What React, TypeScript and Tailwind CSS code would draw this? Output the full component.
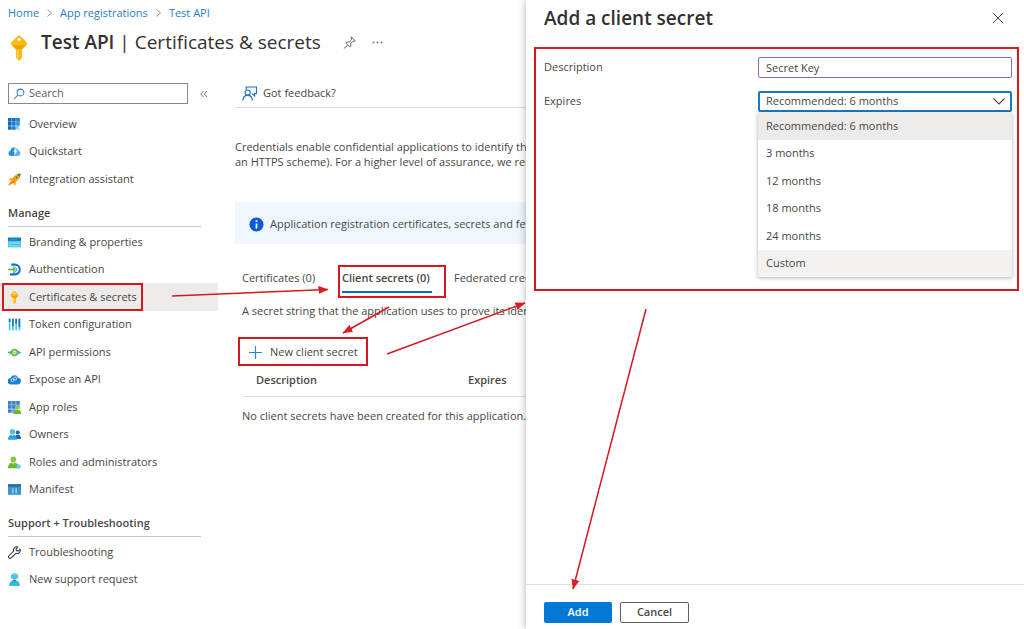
import { useState } from 'react'
import type { ReactNode } from 'react'

type NavItem = { label: string; icon: ReactNode; active?: boolean }

function Icon({ children, className = 'size-[13px]' }: { children: ReactNode; className?: string }) {
  return (
    <svg viewBox="0 0 16 16" fill="none" aria-hidden="true" className={`shrink-0 ${className}`}>
      {children}
    </svg>
  )
}

function KeyIcon({ className }: { className?: string }) {
  return (
    <Icon className={className}>
      <path d="M7.4.4a.9.9 0 0 1 1.2 0l3.8 3.7a1.6 1.6 0 0 1 0 2.3L9.8 9v5.2L8 16l-1.8-1.8V9L3.6 6.4a1.6 1.6 0 0 1 0-2.3z" fill="#fdb913" />
      <path d="M4 6.300h8L9.800 8.600H6.200z" fill="#f59d0b" />
      <path d="M7.200 9.500v5" stroke="#ffd95e" strokeWidth=".9" />
      <circle cx="8" cy="2.800" r="1.100" fill="#fff4cf" />
    </Icon>
  )
}

const overviewItems: NavItem[] = [
  {
    label: 'Overview',
    icon: (
      <Icon>
        <path d="M0 0h4.500v4.500H0zM5 0h4.500v4.500H5zM0 5h4.500v4.500H0zM0 10h4.500v4.500H0z" fill="#0f6cbd" />
        <path d="M10 0h4.500v4.500H10zM5 5h4.500v4.500H5zM5 10h4.500v4.500H5z" fill="#1b7fd0" />
        <path d="M10 5h4.500v4.500H10z" fill="#2a93e0" />
        <path d="m8.500 8.500 6.300 2.400-2 1.100 2.400 2.500-1 1-2.500-2.400-1 2z" fill="#8cc8f0" />
      </Icon>
    ),
  },
  {
    label: 'Quickstart',
    icon: (
      <Icon>
        <path d="M3.300 13.500A3.200 3.200 0 0 1 3 7.200 4.600 4.600 0 0 1 8 3v10.500z" fill="#2b8fd0" />
        <path d="M8 3a4.600 4.600 0 0 1 4.700 3.800 3.400 3.400 0 0 1 0 6.700H8z" fill="#5bb4e5" />
        <path d="M9.500 4 6.800 8.500h2L7.500 13l4.200-5.800H9.500L11 4z" fill="#fff" />
      </Icon>
    ),
  },
  {
    label: 'Integration assistant',
    icon: (
      <Icon>
        <path d="M15.500.5C10 1 7.500 3.500 5.500 6.300L1 7l-.5 1.500 3.500.5L0 15.500 7 12l.6 3.500L9 15l1-4.500C13 8.500 15 6 15.500.5z" fill="#f7a51c" />
        <path d="M9 7 .5 15.500 7 12z" fill="#e07b12" />
        <path d="M15.500.5c-1.800.1-3.200.5-4.400 1.200l3.200 3.200c.7-1.200 1.100-2.600 1.200-4.400z" fill="#4b7f3a" />
        <circle cx="10.500" cy="5.500" r="1.300" fill="#5d7b2f" />
      </Icon>
    ),
  },
]

const manageItems: NavItem[] = [
  {
    label: 'Branding & properties',
    icon: (
      <Icon>
        <path d="M0 2h16v12H0z" fill="#50c8ea" />
        <path d="M0 2h16v4H0z" fill="#1280bf" />
        <path d="M1.500 8h13v4.500h-13z" fill="#84dcf3" />
        <path d="M2 10.500h12M2 4h9" stroke="#2ba6d4" />
      </Icon>
    ),
  },
  {
    label: 'Authentication',
    icon: (
      <Icon>
        <path d="M4 2h4.500a6 6 0 0 1 0 12H2.500" stroke="#1471bd" strokeWidth="2.500" />
        <path d="M6 5.200A3.200 3.200 0 1 1 6 11" stroke="#35a4df" strokeWidth="1.400" />
        <path d="M0 7h6V4.800L9.800 8 6 11.200V9H0z" fill="#62b52c" />
      </Icon>
    ),
  },
  { label: 'Certificates & secrets', icon: <KeyIcon />, active: true },
  {
    label: 'Token configuration',
    icon: (
      <Icon>
        <path d="M2 1v14M6 1v14M10 1v14M14 1v14" stroke="#47c3e8" strokeWidth="2" />
        <path d="M2 1v4M6 1v9M10 1v6M14 1v10" stroke="#1a72b5" strokeWidth="2" />
      </Icon>
    ),
  },
  {
    label: 'API permissions',
    icon: (
      <Icon>
        <path d="M0 8h3.500M12.500 8H16" stroke="#32a9dc" strokeWidth="2" />
        <path d="M2 5.800 4.200 8 2 10.200M14 5.800 11.800 8l2.200 2.200" stroke="#2d95cc" strokeWidth="1.200" />
        <circle cx="8" cy="8" r="3.500" stroke="#6cb33f" strokeWidth="2" />
        <circle cx="8" cy="8" r="1.500" fill="#86d633" />
      </Icon>
    ),
  },
  {
    label: 'Expose an API',
    icon: (
      <Icon>
        <path d="M3.700 14A3.700 3.700 0 0 1 3.200 6.300 5 5 0 0 1 12.500 5.700a4.200 4.200 0 0 1-.3 8.300z" fill="#1b7fd0" />
        <circle cx="5.500" cy="8.800" r="1.700" stroke="#c5e6fa" strokeWidth="1.200" />
        <circle cx="9" cy="6.800" r="1.800" stroke="#c5e6fa" strokeWidth="1.200" />
      </Icon>
    ),
  },
  {
    label: 'App roles',
    icon: (
      <Icon>
        <path d="M0 0h4.500v4.500H0zM5 0h4.500v4.500H5zM10 0h4.500v4.500H10zM0 5h4.500v4.500H0zM5 5h4.500v4.500H5zM0 10h4.500v4.500H0z" fill="#3f7fd0" />
        <path d="M10 5h4.500v4.500H10zM5 10h4.500v4.500H5z" fill="#6ba3e5" />
        <circle cx="11.500" cy="7.800" r="2.500" fill="#8bd03a" />
        <path d="M6.500 16c0-3.500 1.800-5.500 5-5.500s4.500 2 4.500 5.500z" fill="#6fb82c" />
      </Icon>
    ),
  },
  {
    label: 'Owners',
    icon: (
      <Icon>
        <circle cx="12" cy="5.500" r="2.500" fill="#1565b0" />
        <path d="M8 13.500c0-3.500 1.500-5.200 4-5.200s4 1.700 4 5.200z" fill="#1565b0" />
        <circle cx="5.500" cy="4.500" r="3.200" fill="#4cc0ea" />
        <path d="M0 14.500C0 10.500 2 8 5.500 8s5.500 2.500 5.500 6.500z" fill="#27a3da" />
        <path d="m4 8 1.500 2.500L7 8z" fill="#c8f0fb" />
      </Icon>
    ),
  },
  {
    label: 'Roles and administrators',
    icon: (
      <Icon>
        <circle cx="6.500" cy="4" r="3.500" fill="#86c93b" />
        <path d="M0 15c0-4.500 2.300-7 6.500-7s6.500 2.500 6.500 7z" fill="#6eb52b" />
        <path d="M5 8h3l-1.500 3z" fill="#d8f3b4" />
        <circle cx="13" cy="13" r="2.700" fill="#6dcbea" />
      </Icon>
    ),
  },
  {
    label: 'Manifest',
    icon: (
      <Icon>
        <path d="M0 1.500h16v13H0z" fill="#3a94cc" />
        <path d="M0 1.500h16v3H0z" fill="#2a6b9b" />
        <path d="M6 6.500v6M10 6.500v6" stroke="#a9def5" strokeWidth="1.500" />
      </Icon>
    ),
  },
]

const supportItems: NavItem[] = [
  {
    label: 'Troubleshooting',
    icon: (
      <Icon>
        <path
          d="M14.800 3.800 12.500 6 10.300 5.700 10 3.500l2.200-2.300a4 4 0 0 0-5.300 5L1.200 12a1.800 1.800 0 0 0 2.700 2.700L9.700 9a4 4 0 0 0 5.100-5.200z"
          stroke="#3b3a39"
          strokeWidth="1.300"
          strokeLinejoin="round"
        />
      </Icon>
    ),
  },
  {
    label: 'New support request',
    icon: (
      <Icon>
        <path d="M4 6.500V5a4 4 0 0 1 8 0v1.500" stroke="#3aa9d8" strokeWidth="1.300" />
        <circle cx="8" cy="5" r="3.300" fill="#48c4e6" />
        <path d="M1.500 16c0-4.500 2-7.500 6.500-7.500s6.500 3 6.500 7.500z" fill="#35b9e0" />
        <path d="M6.300 8.500h3.400L8 11.500z" fill="#197fb5" />
      </Icon>
    ),
  },
]

const expiryOptions = ['Recommended: 6 months', '3 months', '12 months', '18 months', '24 months', 'Custom']

function NavList({ items }: { items: NavItem[] }) {
  return (
    <ul>
      {items.map(item => (
        <li key={item.label} className="odd:h-7 even:h-[27px]">
          <a
            href="#"
            aria-current={item.active ? 'page' : undefined}
            className={`flex h-full items-center gap-2 pl-2 ${item.active ? 'bg-[#edebe9]' : ''}`}
          >
            {item.icon}
            {item.label}
          </a>
        </li>
      ))}
    </ul>
  )
}

function NavHeading({ children }: { children: ReactNode }) {
  return (
    <h2 className="mr-[17px] mb-px ml-2 flex h-[34px] items-center border-b border-[#c8c6c4] pt-2 font-semibold">
      {children}
    </h2>
  )
}

function Chevron() {
  return (
    <svg viewBox="0 0 5 8" fill="none" className="h-2 w-[5px]" aria-hidden="true">
      <path d="m.5.5 4 3.500-4 3.500" stroke="#8a8886" strokeWidth=".9" />
    </svg>
  )
}

function Crumbs() {
  return (
    <nav aria-label="Breadcrumb" className="flex h-[26px] items-center gap-2 text-[#2b7cc4]">
      <a href="#">Home</a>
      <Chevron />
      <a href="#">App registrations</a>
      <Chevron />
      <a href="#">Test API</a>
    </nav>
  )
}

function Sidebar() {
  return (
    <aside className="w-[218px] shrink-0">
      <div className="mb-1.5 flex items-center gap-3 pt-[5px] pl-2">
        <label className="flex h-[21px] w-[180px] items-center gap-1 border border-[#8a8886] px-1">
          <Icon className="size-3">
            <circle cx="10" cy="6" r="4.500" stroke="#2b7cc4" strokeWidth="1.400" />
            <path d="m6.500 9.500-5.500 5.500" stroke="#2b7cc4" strokeWidth="1.400" />
          </Icon>
          <input type="search" aria-label="Search" placeholder="Search" className="w-full outline-none placeholder:text-[#605e5c]" />
        </label>
        <button type="button" aria-label="Collapse menu" className="text-[#605e5c]">
          <svg viewBox="0 0 8 8" fill="none" className="size-2">
            <path d="M3.500 1 .8 4l2.700 3M7 1 4.300 4 7 7" stroke="currentColor" strokeWidth=".9" />
          </svg>
        </button>
      </div>
      <NavList items={overviewItems} />
      <NavHeading>Manage</NavHeading>
      <NavList items={manageItems} />
      <NavHeading>Support + Troubleshooting</NavHeading>
      <NavList items={supportItems} />
    </aside>
  )
}

function Content() {
  return (
    <main className="min-w-0 flex-1 overflow-hidden pl-[17px] whitespace-nowrap">
      <div className="flex h-[30px] items-center border-b border-[#dddbd9] pt-0.5 pl-[7px]">
        <button type="button" className="flex items-center gap-1.5">
          <Icon className="size-[15px]">
            <path d="M4.500 4V1h11v7h-2v2.500L11 8" stroke="#1c6fb8" strokeWidth="1.200" />
            <circle cx="6" cy="7" r="2.800" stroke="#1c6fb8" strokeWidth="1.200" />
            <path d="M1 15.500c0-3.500 2-5.500 5-5.500s5 2 5 5.500" stroke="#1c6fb8" strokeWidth="1.200" />
          </Icon>
          Got feedback?
        </button>
      </div>

      <p className="pt-[31px] leading-[15px]">
        Credentials enable confidential applications to identify themselves
        <br />
        an HTTPS scheme). For a higher level of assurance, we recommend
      </p>

      <div className="mt-[33px] flex h-[42px] items-center gap-1.5 bg-[#f0f6ff] pt-0.5 pl-3.5">
        <Icon className="size-[15px]">
          <circle cx="8" cy="8" r="7.500" fill="#0b5bd3" />
          <path d="M8 6.800v5.400M8 3.500v1.900" stroke="#fff" strokeWidth="1.900" />
        </Icon>
        Application registration certificates, secrets and federated
      </div>

      <div className="pl-[7px]">
        <div role="tablist" className="mt-[19px] flex gap-[22px] text-left">
          <button type="button" role="tab" aria-selected="false" className="h-[30px] min-w-[78px] text-left">
            Certificates (0)
          </button>
          <button type="button" role="tab" aria-selected="true" className="h-[30px] min-w-[90px] border-b-2 border-[#0f6cbd] pt-0.5 text-left font-semibold">
            Client secrets (0)
          </button>
          <button type="button" role="tab" aria-selected="false" className="h-[30px]">
            Federated credentials (0)
          </button>
        </div>
        <p className="mt-[9px] leading-[18px]">A secret string that the application uses to prove its identity</p>
        <button type="button" className="mt-5 flex h-6 items-center gap-2 pl-[7px]">
          <svg viewBox="0 0 13 13" fill="none" className="size-[13px]" aria-hidden="true">
            <path d="M6.500 0v13M0 6.500h13" stroke="#2b88d8" strokeWidth="1.200" />
          </svg>
          New client secret
        </button>
        <table className="mt-px w-full table-fixed text-left">
          <thead>
            <tr className="h-[31px] border-b border-[#e1dfdd]">
              <th scope="col" className="w-[226px] pl-3.5 font-semibold">Description</th>
              <th scope="col" className="font-semibold">Expires</th>
            </tr>
          </thead>
          <tbody>
            <tr className="h-10">
              <td colSpan={2}>No client secrets have been created for this application.</td>
            </tr>
          </tbody>
        </table>
      </div>
    </main>
  )
}

function SecretPanel() {
  const [description, setDescription] = useState('Secret Key')
  const [expires, setExpires] = useState(expiryOptions[0])

  return (
    <section
      aria-labelledby="panel-title"
      className="relative flex w-[498px] shrink-0 flex-col bg-white shadow-[-1px_0_7px_rgba(0,0,0,0.25)]"
    >
      <header className="flex h-9 items-center justify-between pr-[21px] pl-[18px]">
        <h2 id="panel-title" className="text-[19px] font-semibold text-[#323130]">Add a client secret</h2>
        <button type="button" aria-label="Close">
          <svg viewBox="0 0 10 10" fill="none" className="size-2.5">
            <path d="m0 0 10 10M10 0 0 10" stroke="#484644" strokeWidth="1" />
          </svg>
        </button>
      </header>

      <form className="flex flex-1 flex-col" onSubmit={e => e.preventDefault()}>
        <div className="flex flex-1 flex-col gap-[13px] pt-[21px] pr-3 pl-[18px]">
          <div className="flex items-center justify-between">
            <label htmlFor="description">Description</label>
            <input
              id="description"
              value={description}
              onChange={e => setDescription(e.target.value)}
              className="h-[21px] w-[254px] rounded-xs border border-[#8f6aae] px-[7px] outline-none"
            />
          </div>
          <div className="flex items-center justify-between">
            <label htmlFor="expires">Expires</label>
            <div className="relative w-[254px]">
              <select
                id="expires"
                value={expires}
                onChange={e => setExpires(e.target.value)}
                className="block h-[21px] w-full appearance-none rounded-xs border-2 border-[#1a7abf] px-1.5 outline-none"
              >
                {expiryOptions.map(option => (
                  <option key={option}>{option}</option>
                ))}
              </select>
              <svg viewBox="0 0 12 7" fill="none" className="pointer-events-none absolute top-[7px] right-[7px] h-[7px] w-3" aria-hidden="true">
                <path d="m.5.5 5.500 5.500 5.500-5.500" stroke="#484644" strokeWidth="1.100" />
              </svg>
              <ul role="listbox" aria-label="Expires" className="absolute inset-x-0 top-full bg-white shadow-[0_1px_4px_rgba(0,0,0,0.3)]">
                {expiryOptions.map(option => (
                  <li
                    key={option}
                    role="option"
                    aria-selected={option === expires}
                    onClick={() => setExpires(option)}
                    className="flex items-center px-2 last:bg-[#f3f2f1] odd:h-7 even:h-[27px] aria-selected:bg-[#edebe9]"
                  >
                    {option}
                  </li>
                ))}
              </ul>
            </div>
          </div>
        </div>

        <footer className="flex gap-2 border-t border-[#e1dfdd] pt-[17px] pb-1.5 pl-[18px] font-semibold">
          <button type="submit" className="h-[21px] w-[68px] rounded-xs bg-[#0078d4] text-white">Add</button>
          <button type="button" className="h-[21px] w-[69px] rounded-xs border border-[#605e5c]">Cancel</button>
        </footer>
      </form>
    </section>
  )
}

// Red boxes and arrows that walk the reader through the steps
function Callouts() {
  return (
    <svg viewBox="0 0 1024 629" fill="none" stroke="#d3191f" aria-hidden="true" className="pointer-events-none absolute top-0 left-0 h-[629px] w-[1024px]">
      <defs>
        <marker id="head" viewBox="0 0 10 8" refX="9.500" refY="4" markerWidth="10" markerHeight="8" markerUnits="userSpaceOnUse" orient="auto">
          <path d="M0 0 10 4 0 8z" fill="#e01b22" stroke="none" />
        </marker>
      </defs>
      <g strokeWidth="2">
        <rect x="3" y="284" width="139" height="26" />
        <rect x="339" y="266" width="106" height="31" />
        <rect x="239" y="338" width="128" height="27" />
        <rect x="535" y="48" width="483" height="242" />
      </g>
      <g strokeWidth="1.500">
        <path d="M172 296 328 289.500" markerEnd="url(#head)" />
        <path d="M389 307 343 333" markerEnd="url(#head)" />
        <path d="M387 354 525 303" markerEnd="url(#head)" />
        <path d="M646 309 573 589" markerEnd="url(#head)" />
      </g>
    </svg>
  )
}

export default function App() {
  return (
    <div className="relative flex min-h-screen overflow-hidden bg-white font-['Open_Sans','Noto_Sans',sans-serif] text-[11px] text-[#484644]">
      <div className="min-w-0 flex-1 overflow-hidden">
        <header className="pl-2">
          <Crumbs />
          <div className="flex h-8 items-center text-[#323130]">
            <KeyIcon className="mt-3 -ml-0.5 size-[26px]" />
            <h1 className="ml-[9px] text-[19px] whitespace-nowrap">
              <span className="font-semibold">Test API</span> | Certificates &amp; secrets
            </h1>
            <button type="button" aria-label="Pin" className="ml-[22px]">
              <Icon className="size-[13px]">
                <path d="m10 1 5 5-1.500.7-1.200-.2-2.600 2.600-.2 3.400-1.200 1L3.500 8.700l1-1.200 3.400-.2 2.600-2.600-.2-1.200zM5.800 11.200 1 15.500" stroke="#605e5c" strokeWidth="1.200" />
              </Icon>
            </button>
            <button type="button" aria-label="More" className="ml-4">
              <svg viewBox="0 0 11 3" fill="#797775" className="h-[3px] w-[11px]">
                <circle cx="1.500" cy="1.500" r="1" />
                <circle cx="5.500" cy="1.500" r="1" />
                <circle cx="9.500" cy="1.500" r="1" />
              </svg>
            </button>
          </div>
        </header>
        <div className="flex pt-5">
          <Sidebar />
          <Content />
        </div>
      </div>
      <SecretPanel />
      <Callouts />
    </div>
  )
}
